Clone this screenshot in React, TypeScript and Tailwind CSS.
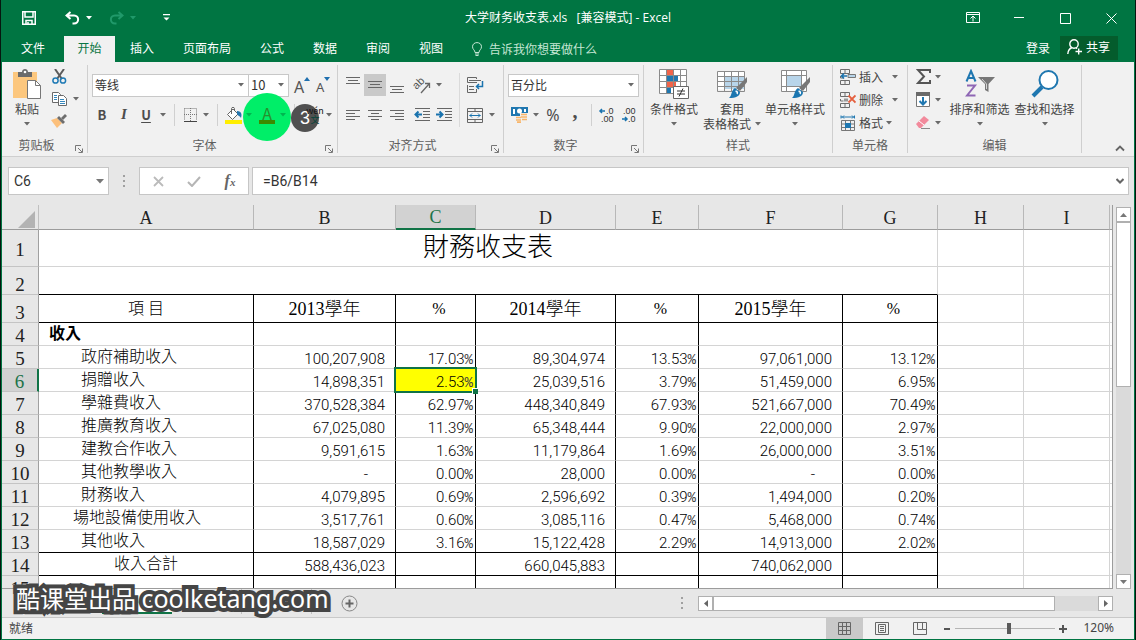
import type { ReactNode } from "react";
import clsx from "clsx";

const menuTabs = ["插入", "页面布局", "公式", "数据", "审阅", "视图"];

const columns = [
  { name: "A", width: "w-[215px]" },
  { name: "B", width: "w-[142px]" },
  { name: "C", width: "w-[80px]" },
  { name: "D", width: "w-[140px]" },
  { name: "E", width: "w-[83px]" },
  { name: "F", width: "w-[144px]" },
  { name: "G", width: "w-[95px]" },
  { name: "H", width: "w-[86px]" },
  { name: "I", width: "w-[86px]" },
];

const rows = [
  { n: 5, label: "政府補助收入", cells: ["100,207,908", "17.03%", "89,304,974", "13.53%", "97,061,000", "13.12%"] },
  { n: 6, label: "捐贈收入", cells: ["14,898,351", "2.53%", "25,039,516", "3.79%", "51,459,000", "6.95%"] },
  { n: 7, label: "學雜費收入", cells: ["370,528,384", "62.97%", "448,340,849", "67.93%", "521,667,000", "70.49%"] },
  { n: 8, label: "推廣教育收入", cells: ["67,025,080", "11.39%", "65,348,444", "9.90%", "22,000,000", "2.97%"] },
  { n: 9, label: "建教合作收入", cells: ["9,591,615", "1.63%", "11,179,864", "1.69%", "26,000,000", "3.51%"] },
  { n: 10, label: "其他教學收入", cells: ["-", "0.00%", "28,000", "0.00%", "-", "0.00%"] },
  { n: 11, label: "財務收入", cells: ["4,079,895", "0.69%", "2,596,692", "0.39%", "1,494,000", "0.20%"] },
  { n: 12, label: "場地設備使用收入", cells: ["3,517,761", "0.60%", "3,085,116", "0.47%", "5,468,000", "0.74%"] },
  { n: 13, label: "其他收入", cells: ["18,587,029", "3.16%", "15,122,428", "2.29%", "14,913,000", "2.02%"] },
  { n: 14, label: "收入合計", cells: ["588,436,023", "", "660,045,883", "", "740,062,000", ""] },
  { n: 15, label: "", cells: ["", "", "", "", "", ""] },
];

function Caret({ className = "text-[#6a6a6a]" }: { className?: string }) {
  return (
    <svg width="6" height="4" viewBox="0 0 6 4" className={className}>
      <path d="M0 0h6L3 3.5z" fill="currentColor" />
    </svg>
  );
}

function DropButton({ label, className }: { label: string; className?: string }) {
  return (
    <button aria-label={label} className="flex h-5 w-3 shrink-0 items-center justify-center">
      <Caret className={className} />
    </button>
  );
}

function IconButton({ label, children, className = "w-[22px]" }: { label: string; children: ReactNode; className?: string }) {
  return (
    <button aria-label={label} className={clsx("flex h-[22px] shrink-0 items-center justify-center", className)}>
      {children}
    </button>
  );
}

function Separator() {
  return <span className="mx-[5px] h-[22px] w-px shrink-0 bg-[#d0d0d0]" />;
}

function Group({ title, launcher, className, children }: { title: string; launcher?: boolean; className: string; children: ReactNode }) {
  return (
    <section className={clsx("flex h-[88px] shrink-0 flex-col border-r border-[#cfcfcf]", className)}>
      <div className="flex h-[72px]">{children}</div>
      <div className={clsx("relative h-4 text-center leading-4 text-[#5e5e5e]", launcher && "pr-4")}>
        {title}
        {launcher && (
          <button aria-label={title + "设置"} className="absolute right-1 bottom-0">
            <svg width="8" height="8" viewBox="0 0 8 8" fill="none" stroke="#777">
              <path d="M.5 6V.5H6M3 3l4 4M7.500 3.500v4h-4" />
            </svg>
          </button>
        )}
      </div>
    </section>
  );
}

function Lines({ spans, top = 0 }: { spans: number[][]; top?: number }) {
  return (
    <svg width="16" height="18" viewBox="0 0 16 18" stroke="#666">
      {spans.map(([a, b], i) => (
        <path key={i} d={`M${a} ${top + i * 3 + 0.5}H${b}`} />
      ))}
    </svg>
  );
}

function IndentIcon({ out }: { out?: boolean }) {
  return (
    <svg width="17" height="14" viewBox="0 0 17 14" fill="none" stroke="#666">
      <path d="M1 .5h15M9 3.500h7M9 6.500h7M9 9.500h7M1 12.500h15" />
      <path d={out ? "M8 6.500H1.500M4.500 3.500l-3 3 3 3" : "M0 6.500h6.500M3.500 3.500l3 3-3 3"} stroke="#1a73ae" strokeWidth="2" />
    </svg>
  );
}

function Brush() {
  return (
    <>
      <path d="M30 8v5l-7 9-4-3z" fill="#777" />
      <path d="M18 19l5 4c0 4-4 6-11 6 3-2 2-8 6-10z" fill="#1b76b0" />
      <path d="M18.500 22.500c1.500-.5 2.500 1 1.500 2.500" stroke="#fff" strokeWidth="1.500" fill="none" />
    </>
  );
}

function MiniGrid() {
  return <path d="M.5.5h9v4h-9zM5 .5v4M.5 11.500h9v4h-9zM5 11.500v4M.5 7v2h3" fill="none" stroke="#6d6d6d" />;
}

function BigButton({ icon, lines, className }: { icon: ReactNode; lines: string[]; className: string }) {
  return (
    <button className={clsx("flex shrink-0 flex-col items-center pt-1 leading-[15px]", className)}>
      <span className="mb-0.5 flex h-[30px] items-center">{icon}</span>
      <span>{lines[0]}</span>
      <span className="flex h-[15px] items-center gap-1">
        {lines[1]}
        <Caret />
      </span>
    </button>
  );
}

function TitleBar() {
  return (
    <header className="grid h-9 grid-cols-[1fr_auto_1fr] items-center text-white">
      <div className="flex items-center pl-4">
        <IconButton label="保存">
          <svg width="14" height="14" viewBox="0 0 14 14" fill="none" stroke="#fff" strokeWidth="1.500">
            <path d="M.75.75h12.500v12.500H.75zM3 1v5h8V1M4 13V9.500h6V13M6 11v2" />
          </svg>
        </IconButton>
        <IconButton label="撤销" className="ml-[21px] w-[22px]">
          <svg width="15" height="14" viewBox="0 0 15 14" fill="none" stroke="#fff" strokeWidth="2">
            <path d="M5.500 1 1.500 4.500l4 3.500M2 4.500h7c5.500 0 5.500 8 0 8H7.500" />
          </svg>
        </IconButton>
        <DropButton label="撤销列表" className="text-white" />
        <IconButton label="恢复" className="ml-[10px] w-[22px]">
          <svg width="15" height="14" viewBox="0 0 15 14" fill="none" stroke="#20996a" strokeWidth="2">
            <path d="M9.500 1l4 3.500-4 3.500M13 4.500H6c-5.500 0-5.500 8 0 8h1.500" />
          </svg>
        </IconButton>
        <DropButton label="恢复列表" className="text-[#20996a]" />
        <IconButton label="自定义快速访问工具栏" className="ml-4 w-[22px]">
          <svg width="7" height="8" viewBox="0 0 7 8" fill="#fff">
            <path d="M0 0h7v1.300H0zM.5 3.500h6l-3 3z" />
          </svg>
        </IconButton>
      </div>
      <h1 className="font-['Open_Sans','Noto_Sans_CJK_SC',sans-serif] text-xs">大学财务收支表.xls&nbsp;&nbsp; [兼容模式] - Excel</h1>
      <div className="flex items-center justify-end gap-6 pr-3">
        <IconButton label="功能区显示选项">
          <svg width="14" height="12" viewBox="0 0 14 12" fill="none" stroke="#fff">
            <path d="M.5.5h13v10H.5zM.5 2.500h13M7 9.500v-5M4.500 6.500 7 4l2.500 2.500" />
          </svg>
        </IconButton>
        <IconButton label="最小化">
          <svg width="10" height="2" viewBox="0 0 10 2"><path d="M0 .5h10" stroke="#fff" /></svg>
        </IconButton>
        <IconButton label="最大化">
          <svg width="11" height="11" viewBox="0 0 11 11"><path d="M.5.5h10v10H.5z" fill="none" stroke="#fff" /></svg>
        </IconButton>
        <IconButton label="关闭">
          <svg width="11" height="11" viewBox="0 0 11 11"><path d="M.5.5l10 10M10.500.5l-10 10" stroke="#fff" /></svg>
        </IconButton>
      </div>
    </header>
  );
}

function MenuBar() {
  return (
    <nav className="flex h-[26px] items-stretch text-white">
      <button className="w-[62px] shrink-0 pb-0.5">文件</button>
      <button className="w-[51px] shrink-0 bg-[#f1f1f1] pb-0.5 text-[#0a7544]">开始</button>
      <div className="flex gap-px pl-px">
        {menuTabs.map((tab) => (
          <button key={tab} className="shrink-0 px-[14px] pb-0.5">{tab}</button>
        ))}
      </div>
      <button className="ml-[15px] flex shrink-0 items-center gap-[7px] text-[#c5e6d4]">
        <svg width="10" height="14" viewBox="0 0 10 14" fill="none" stroke="currentColor">
          <path d="M3 10.500C3 8 .5 7.500.5 4.800.5-.8 9.500-.8 9.500 4.800 9.500 7.500 7 8 7 10.500zM3 12h4M3.500 13.500h3" />
        </svg>
        告诉我你想要做什么
      </button>
      <div className="ml-auto flex items-start gap-[10px] pr-4">
        <button className="h-6">登录</button>
        <button className="flex h-6 w-[58px] items-center gap-1 bg-[#045c2c] pb-0.5 pl-[7px]">
          <svg width="15" height="16" viewBox="0 0 15 16" fill="none" stroke="#fff" strokeWidth="1.400">
            <circle cx="7" cy="5" r="4.200" />
            <path d="M5 8.500C2.500 9.500 1 11.500.8 15M9 8.700l1 1M8.500 12.500H15M11.700 9.500v6" />
          </svg>
          共享
        </button>
      </div>
    </nav>
  );
}

function ClipboardGroup() {
  return (
    <Group title="剪贴板" launcher className="w-[86px]">
      <BigButton
        className="ml-1 w-[42px]"
        lines={["粘贴", ""]}
        icon={
          <svg width="28" height="30" viewBox="0 0 28 30">
            <path d="M0 3h24v26H0z" fill="#fcc77e" />
            <path d="M5 3h4c0-4 6-4 6 0h4v5H5z" fill="#6b6b6b" />
            <circle cx="12" cy="3" r="1.300" fill="#fff" />
            <path d="M14.500 11.500h8l5 5v13h-13z" fill="#fff" stroke="#777" />
            <path d="M22.500 11.500v5h5" fill="none" stroke="#777" />
          </svg>
        }
      />
      <div className="flex flex-col">
        <IconButton label="剪切">
          <svg width="15" height="15" viewBox="0 0 15 15" fill="none">
            <path d="M3 0l7 10M12 0L5 10" stroke="#5c5c5c" strokeWidth="2" />
            <circle cx="3.500" cy="11.500" r="2.600" stroke="#1f7ab5" strokeWidth="1.500" />
            <circle cx="11" cy="11.500" r="2.600" stroke="#1f7ab5" strokeWidth="1.500" />
          </svg>
        </IconButton>
        <div className="mt-px flex items-center">
          <IconButton label="复制">
            <svg width="15" height="14" viewBox="0 0 15 14" fill="#fff" stroke="#6a6a6a">
              <path d="M.5.5h6l2 2v8h-8z" />
              <path d="M6.500 3.500h5l3 3v7h-8z" />
              <path d="M2 3.500h3M2 5.500h3M2 7.500h3M8 7.500h4M8 9.500h5M8 11.500h5" stroke="#3687bd" />
            </svg>
          </IconButton>
          <DropButton label="复制选项" />
        </div>
        <IconButton label="格式刷">
          <svg width="16" height="14" viewBox="0 0 16 14">
            <path d="M0 6l6-2 5 5-5 5z" fill="#fcc07c" />
            <path d="M6 4l2-2 6 6-2 2z" fill="#6e6e6e" />
            <path d="M10 4l4-4 2 2-4 4z" fill="#6e6e6e" />
          </svg>
        </IconButton>
      </div>
    </Group>
  );
}

function FontGroup() {
  return (
    <Group title="字体" launcher className="w-[250px]">
      <div className="flex flex-col pt-2 pl-[3px]">
        <div className="flex h-6 items-center pl-px">
          <Combo label="字体名称" value="等线" className="w-[157px]" />
          <Combo label="字号" value="10" className="-ml-px w-[41px] text-[13px]" />
          <button aria-label="增大字号" className="ml-[5px] flex h-5 w-[19px] items-start font-['Noto_Sans'] text-base leading-6 text-[#555]">
            A<svg width="6" height="6" viewBox="0 0 6 6"><path d="M3 2l3 4H0z" fill="#1f6fae" /></svg>
          </button>
          <button aria-label="减小字号" className="ml-[3px] flex h-5 w-[19px] items-start font-['Noto_Sans'] text-[13px] leading-6 text-[#555]">
            A<svg width="6" height="6" viewBox="0 0 6 6"><path d="M0 2h6L3 6z" fill="#1f6fae" /></svg>
          </button>
        </div>
        <div className="relative mt-[7px] flex h-[22px] items-center text-[13px] text-[#4d4d4d]">
          <IconButton label="加粗"><b>B</b></IconButton>
          <IconButton label="倾斜"><i className="font-['Liberation_Serif'] text-[15px] font-bold">I</i></IconButton>
          <IconButton label="下划线"><u className="font-bold underline-offset-2">U</u></IconButton>
          <DropButton label="下划线样式" />
          <Separator />
          <IconButton label="边框" className="w-5">
            <svg width="13" height="14" viewBox="0 0 13 14" fill="none" stroke="#777">
              <path d="M.5.5h12v12M.5.5v12M6.500 0v13M0 6.500h13" strokeDasharray="1 1" />
              <path d="M0 13.500h13" stroke="#444" />
            </svg>
          </IconButton>
          <DropButton label="边框样式" />
          <Separator />
          <IconButton label="填充颜色" className="w-5">
            <svg width="17" height="17" viewBox="0 0 17 17">
              <path d="M2.500 7.500 8 2l5 5-5.500 5.500z" fill="#fff" stroke="#666" />
              <path d="M6.500 7V1.500c0-1.500 3-1.500 3 0V4" fill="none" stroke="#666" />
              <path d="M12 4c5 0 5 4 4 7-1-2-3-2-4-4z" fill="#2576ae" />
              <path d="M0 13h17v4H0z" fill="#ffee00" />
            </svg>
          </IconButton>
          {/* click marker sits under the font colour button */}
          <span className="absolute -top-[11px] left-[152px] size-12 rounded-full bg-[#00ee68]" />
          <span className="relative flex items-center">
            <DropButton label="填充颜色选项" className="text-[#00b650]" />
            <IconButton label="字体颜色" className="ml-0.5 w-5">
              <span className="flex flex-col items-center text-base leading-[13px] text-[#27902f]">
                A
                <span className="h-1 w-4 bg-[#3c8a00]" />
              </span>
            </IconButton>
            <DropButton label="字体颜色选项" className="text-[#00b650]" />
          </span>
          <Separator />
          <span className="absolute top-0 left-[200px] flex size-7 items-center justify-center rounded-full bg-[#505050] font-['Liberation_Sans'] text-lg text-white">3</span>
          <IconButton label="拼音" className="relative ml-[5px] w-5">
            <span className="flex flex-col items-center text-[9px] leading-[9px] text-[#111]">
              wén
              <span className="text-[#07443a]">文</span>
            </span>
          </IconButton>
          <button aria-label="拼音选项" className="flex h-5 w-2 items-center justify-center"><Caret /></button>
        </div>
      </div>
    </Group>
  );
}

function Combo({ label, value, className }: { label: string; value: string; className: string }) {
  return (
    <span className={clsx("relative flex h-[23px] shrink-0 items-center border border-[#c8c8c8] bg-white", className)}>
      <select aria-label={label} className="h-full w-full appearance-none pl-0.5 text-[#333] outline-none">
        <option>{value}</option>
      </select>
      <span className="pointer-events-none absolute right-1">
        <Caret />
      </span>
    </span>
  );
}

function AlignGroup() {
  return (
    <Group title="对齐方式" launcher className="w-[166px]">
      <div className="flex flex-col pt-2 pl-1">
        <div className="flex h-6 items-center">
          <IconButton label="顶端对齐"><Lines spans={[[1, 15], [3, 13], [1, 15]]} top={1} /></IconButton>
          <IconButton label="垂直居中" className="w-[22px] bg-[#c9c9c9]"><Lines spans={[[1, 15], [3, 13], [1, 15]]} top={5} /></IconButton>
          <IconButton label="底端对齐"><Lines spans={[[1, 15], [3, 13], [1, 15]]} top={10} /></IconButton>
          <IconButton label="方向" className="ml-[3px] w-[22px]">
            <svg width="20" height="20" viewBox="0 0 20 20" fill="none" stroke="#666" fontFamily="Liberation Sans" className="shrink-0">
              <text x="0" y="12" transform="rotate(-45 6 8)" fontSize="11" fill="#555" stroke="none">ab</text>
              <path d="M9 18 17 9M13 8.500h4.500V13" strokeWidth="1.300" />
            </svg>
          </IconButton>
          <DropButton label="方向选项" />
        </div>
        <div className="mt-[7px] flex h-[22px] items-center">
          <IconButton label="左对齐"><Lines spans={[[1, 15], [1, 10], [1, 15], [1, 10]]} top={4} /></IconButton>
          <IconButton label="居中"><Lines spans={[[1, 15], [4, 12], [1, 15], [4, 12]]} top={4} /></IconButton>
          <IconButton label="右对齐"><Lines spans={[[1, 15], [6, 15], [1, 15], [6, 15]]} top={4} /></IconButton>
          <IconButton label="减少缩进量" className="ml-[3px] w-[22px]"><IndentIcon out /></IconButton>
          <IconButton label="增加缩进量"><IndentIcon /></IconButton>
        </div>
      </div>
      <span className="mt-2 ml-1 h-[54px] w-px bg-[#dadada]" />
      <div className="flex flex-col pt-2 pl-1">
        <div className="flex h-6 items-center">
          <IconButton label="自动换行">
            <svg width="17" height="16" viewBox="0 0 17 16" fill="none" stroke="#666">
              <path d="M9.500 2V.5h-9v5h9V5M.5 8v7.500h9V12M2 3.500h12M2 5.500h8M2 9.500h5M2 12.500h5" />
              <path d="M15.500 4v5.500H9.500M12 7l-2.500 2.500L12 12" stroke="#1a73ae" strokeWidth="1.500" />
            </svg>
          </IconButton>
        </div>
        <div className="mt-[7px] flex h-[22px] items-center">
          <IconButton label="合并后居中">
            <svg width="16" height="15" viewBox="0 0 16 15" fill="none" stroke="#666">
              <path d="M.5.5h15v14H.5zM.5 3.500h15M.5 11.500h15M8 .5v3M8 11.500v3" />
              <path d="M2.500 7.500h11M5 5.500l-2 2 2 2M11 5.500l2 2-2 2" stroke="#1a73ae" />
            </svg>
          </IconButton>
          <DropButton label="合并选项" />
        </div>
      </div>
    </Group>
  );
}

function DecimalIcon({ more }: { more?: boolean }) {
  return (
    <svg width="20" height="18" viewBox="0 0 20 18" fontSize="9" fontFamily="Liberation Sans" fill="#333" className="shrink-0">
      <text x={more ? 8 : 3} y="8">{more ? ".0" : ".00"}</text>
      <text x={more ? 3 : 8} y="16">{more ? ".00" : ".0"}</text>
      <path d={more ? "M7 5H2M4 3 2 5l2 2" : "M2 13h5M5 11l2 2-2 2"} fill="none" stroke="#1a73ae" strokeWidth="1.500" />
    </svg>
  );
}

function NumberGroup() {
  return (
    <Group title="数字" launcher className="w-[140px]">
      <div className="flex flex-col pt-2 pl-1">
        <div className="flex h-6 items-center">
          <Combo label="数字格式" value="百分比" className="w-[131px]" />
        </div>
        <div className="mt-[7px] flex h-[22px] items-center text-[#4d4d4d]">
          <IconButton label="会计数字格式">
            <svg width="17" height="16" viewBox="0 0 17 16">
              <path d="M0 0h17v9H0z" fill="#1f77b0" />
              <path d="M2 2h2v5H2zM13 2h2v3h-2z" fill="#fff" />
              <circle cx="8.500" cy="4" r="2.500" fill="#fff" />
              <path d="M9 6h8v9H4V9h5z" fill="#f1f1f1" />
              <path d="M10 7.500h6M10 10h6M5 10.500h5M11 12.500h5M5 13h5M6 15.200h4" stroke="#f8b56a" strokeWidth="1.700" />
            </svg>
          </IconButton>
          <DropButton label="货币选项" />
          <IconButton label="百分比样式"><span className="font-['Noto_Sans'] text-base">%</span></IconButton>
          <IconButton label="千位分隔样式"><b className="h-6 font-['Liberation_Serif'] text-xl leading-4">,</b></IconButton>
          <Separator />
          <IconButton label="增加小数位数"><DecimalIcon more /></IconButton>
          <IconButton label="减少小数位数"><DecimalIcon /></IconButton>
        </div>
      </div>
    </Group>
  );
}

function StyleGroup() {
  return (
    <Group title="样式" className="w-[189px]">
      <BigButton
        className="ml-0.5 w-14"
        lines={["条件格式", ""]}
        icon={
          <svg width="30" height="30" viewBox="0 0 30 30" fill="none">
            <path d="M.5.500h27v24H.5z" fill="#fff" />
            <path d="M8 1h6v5H8zM8 13h9v5H8z" fill="#f0644a" />
            <path d="M8 7h11v5H8zM8 19h4v6H8z" fill="#1f77b0" />
            <path d="M.5.5h27v24H.5zM7.500.5v24M14.500.5v24M21.500.5v24M.5 6.500h27M.5 12.500h27M.5 18.500h27" stroke="#8a8a8a" />
            <path d="M14.500 17.500h15v12h-15z" fill="#fff" stroke="#666" />
            <path d="M18 22h8M18 25h8M24 19.500l-4 8" stroke="#333" />
          </svg>
        }
      />
      <BigButton
        className="w-[60px]"
        lines={["套用", "表格格式"]}
        icon={
          <svg width="30" height="30" viewBox="0 0 30 30" fill="none">
            <path d="M.5 2.500h27v18H.5z" fill="#fff" />
            <path d="M7 8h20v12H7z" fill="#b8d5ea" />
            <path d="M.5 2.500h27v20H.5zM7.500 2.500v20M14.500 2.500v20M21.500 2.500v20M.5 7.500h27M.5 12.500h27M.5 17.500h27" stroke="#8a8a8a" />
            <Brush />
          </svg>
        }
      />
      <BigButton
        className="w-[66px]"
        lines={["单元格样式", ""]}
        icon={
          <svg width="30" height="30" viewBox="0 0 30 30" fill="none">
            <path d="M1.500 1.500h25v21h-25z" fill="#fff" />
            <path d="M7 7h14v10H7z" fill="#b8d5ea" />
            <path d="M1.500 1.500h25v21h-25zM6.500 1.500v21M21.500 1.500v21M1.500 6.500h25M1.500 17.500h25" stroke="#8a8a8a" />
            <Brush />
          </svg>
        }
      />
    </Group>
  );
}

function CellsGroup() {
  return (
    <Group title="单元格" className="w-[75px]">
      <div className="flex flex-col pl-[7px]">
        <button className="flex h-[23px] items-center">
          <svg width="16" height="16" viewBox="0 0 16 16">
            <MiniGrid />
            <path d="M8 5.500h7.500v3H8z" fill="#b8d5ea" stroke="#777" />
            <path d="M7 7H1.500M4 4.500 1.500 7 4 9.500" fill="none" stroke="#1a73ae" strokeWidth="1.600" />
          </svg>
          <span className="mr-[9px] ml-[3px]">插入</span>
          <Caret />
        </button>
        <button className="flex h-[23px] items-center">
          <svg width="16" height="16" viewBox="0 0 16 16">
            <MiniGrid />
            <path d="M4 6.500h4v3H4z" fill="#999" />
            <path d="M8.500 3.500l7 7M15.500 3.500l-7 7" stroke="#e5603f" strokeWidth="1.800" />
          </svg>
          <span className="mr-[9px] ml-[3px]">删除</span>
          <Caret />
        </button>
        <button className="flex h-[23px] items-center">
          <svg width="16" height="16" viewBox="0 0 16 16" fill="none">
            <path d="M1.500 5.500h13v10h-13zM5.500 5.500v10M10.500 5.500v10M1.500 9h13M1.500 12.500h13" stroke="#777" />
            <path d="M5 8h6v5H5z" fill="#1f77b0" />
            <path d="M1 .5v3M14.500.5v3M1 2h13.500M4 .5 2.500 2 4 3.500M12 .5 13.500 2 12 3.500" stroke="#1f77b0" />
          </svg>
          <span className="mx-[3px]">格式</span>
          <Caret />
        </button>
      </div>
    </Group>
  );
}

function EditGroup() {
  return (
    <Group title="编辑" className="w-[174px]">
      <div className="flex flex-col pl-1.5">
        <div className="flex h-[23px] items-center">
          <IconButton label="自动求和" className="w-[18px]">
            <svg width="15" height="15" viewBox="0 0 15 15" fill="none" stroke="#555" strokeWidth="2">
              <path d="M14 4V1H2l6 6.500L2 14h12v-3" />
            </svg>
          </IconButton>
          <DropButton label="求和选项" />
        </div>
        <div className="flex h-[23px] items-center">
          <IconButton label="填充" className="w-[18px]">
            <svg width="14" height="15" viewBox="0 0 14 15" fill="none">
              <path d="M.5.5h13v14H.5z" fill="#fff" stroke="#777" />
              <path d="M0 0h14v4H0z" fill="#6a6a6a" />
              <path d="M7 5v7.500M3.500 9 7 12.500 10.500 9" stroke="#1f77b0" strokeWidth="2" />
            </svg>
          </IconButton>
          <DropButton label="填充选项" />
        </div>
        <div className="flex h-[23px] items-center">
          <IconButton label="清除" className="w-[18px]">
            <svg width="14" height="13" viewBox="0 0 14 13">
              <path d="M0 8l8-8 5 4-8 8H3z" fill="#f28a9c" />
              <path d="M3 5l5 4" stroke="#fff" />
              <path d="M5 12.500h9" stroke="#888" />
            </svg>
          </IconButton>
          <DropButton label="清除选项" />
        </div>
      </div>
      <BigButton
        className="ml-[3px] w-[65px]"
        lines={["排序和筛选", ""]}
        icon={
          <svg width="30" height="30" viewBox="0 0 30 30" fill="none">
            <path d="M1.500 12.500 6 2l4.500 10.500M3 9h6" stroke="#1f77b0" strokeWidth="2" />
            <path d="M2 16.500h8l-8 10h8.500" stroke="#8e66b4" strokeWidth="2" />
            <path d="M13 8h17l-6.500 7v8L20 21v-6z" fill="#777" />
            <path d="M17 10l4.500 5v5" stroke="#d5d5d5" />
          </svg>
        }
      />
      <BigButton
        className="w-[65px]"
        lines={["查找和选择", ""]}
        icon={
          <svg width="28" height="28" viewBox="0 0 28 28" fill="none">
            <circle cx="17.500" cy="10" r="9" fill="#fff" stroke="#1f77b0" strokeWidth="2" />
            <path d="M11 17 2 26" stroke="#1f77b0" strokeWidth="4" />
          </svg>
        }
      />
    </Group>
  );
}

function Ribbon() {
  return (
    <div className="flex h-[95px] shrink-0 items-start overflow-hidden border-b border-[#cfcfcf] bg-[#f1f1f1] pt-[3px] text-[#444]">
      <ClipboardGroup />
      <FontGroup />
      <AlignGroup />
      <NumberGroup />
      <StyleGroup />
      <CellsGroup />
      <EditGroup />
      <button aria-label="折叠功能区" className="mr-[9px] ml-auto self-end pb-1">
        <svg width="10" height="7" viewBox="0 0 10 7" fill="none" stroke="#666" strokeWidth="1.800"><path d="M1 5.500l4-4 4 4" /></svg>
      </button>
    </div>
  );
}

function Dots() {
  return (
    <svg width="2" height="12" viewBox="0 0 2 12" fill="#a0a0a0">
      <path d="M0 0h2v2H0zM0 5h2v2H0zM0 10h2v2H0z" />
    </svg>
  );
}

function FormulaBar() {
  return (
    <div className="flex h-12 shrink-0 items-center pr-[5px] pl-1.5 font-['Roboto'] text-sm text-[#333]">
      <div className="relative flex h-7 w-[101px] items-center border border-[#c6c6c6] bg-white">
        <input aria-label="名称框" defaultValue="C6" className="h-full w-full pl-[5px] outline-none" />
        <span className="absolute right-1">
          <svg width="8" height="5" viewBox="0 0 8 5"><path d="M0 0h8L4 4.500z" fill="#777" /></svg>
        </span>
      </div>
      <span className="flex w-[30px] justify-center"><Dots /></span>
      <div className="flex h-7 w-[110px] items-center justify-around border border-[#c6c6c6] bg-white">
        <IconButton label="取消">
          <svg width="11" height="11" viewBox="0 0 11 11"><path d="M1 1l9 9M10 1l-9 9" stroke="#bbb" strokeWidth="1.800" /></svg>
        </IconButton>
        <IconButton label="输入">
          <svg width="14" height="11" viewBox="0 0 14 11"><path d="M1 6l4 4 8-9" fill="none" stroke="#b5b5b5" strokeWidth="2" /></svg>
        </IconButton>
        <IconButton label="插入函数">
          <i className="font-['Liberation_Serif'] text-base leading-4 font-bold text-[#666]">f<span className="text-[11px]">x</span></i>
        </IconButton>
      </div>
      <div className="relative ml-[3px] flex h-7 flex-1 items-center border border-[#c6c6c6] bg-white">
        <input aria-label="编辑栏" defaultValue="=B6/B14" className="h-full w-full pl-[10px] outline-none" />
        <button aria-label="展开编辑栏" className="absolute right-1">
          <svg width="8" height="6" viewBox="0 0 8 6" fill="none" stroke="#666" strokeWidth="2"><path d="M.5 1 4 4.500 7.500 1" /></svg>
        </button>
      </div>
    </div>
  );
}

function RowHeader({ n, active }: { n: number; active?: boolean }) {
  return (
    <th
      scope="row"
      className={clsx(
        "border-r border-b border-b-[#c4c4c4] text-[19px] leading-[19px] font-normal",
        n === 1 ? "pt-0.5 align-middle" : "align-bottom",
        active ? "border-r-2 border-r-[#107346] bg-[#d2d2d2] text-[#1c7348]" : "border-r-[#a0a0a0] bg-[#e7e7e7] text-[#222]",
      )}
    >
      {n}
    </th>
  );
}

function BlankCells() {
  return (
    <>
      <td className="border-r border-b border-[#d4d4d4]" />
      <td className="border-r border-b border-[#d4d4d4]" />
      <td className="border-b border-[#d4d4d4]" />
    </>
  );
}

function ValueCell({ value, n, selected }: { value: string; n: number; selected?: boolean }) {
  const percent = value.endsWith("%");
  return (
    <td
      className={clsx(
        "border-r border-b border-r-black text-right align-bottom font-['Roboto'] text-[15px] leading-[18px] font-light text-black",
        n > 12 && n < 15 ? "border-b-black" : "border-b-[#d4d4d4]",
        percent ? "pr-0.5" : value === "-" ? "pr-[27px]" : "pr-[10px]",
        selected && "relative bg-[#ffff00]",
      )}
    >
      {percent ? value.slice(0, -1) : value}
      {percent && <span className="font-['Liberation_Mono'] text-sm leading-none text-[#444]">%</span>}
      {selected && (
        <>
          <span className="absolute -top-0.5 -right-0.5 -bottom-0.5 -left-0.5 border-2 border-[#107346]" />
          <span className="absolute -right-[3px] -bottom-[3px] size-[6px] border-t border-l border-white bg-[#107346]" />
        </>
      )}
    </td>
  );
}

function Sheet() {
  return (
    <table className="w-full table-fixed border-separate border-spacing-0 bg-white font-['Liberation_Serif','Noto_Sans_CJK_TC',serif] text-base text-black">
      <colgroup>
        <col className="w-[37px]" />
        {columns.map((c) => (
          <col key={c.name} className={c.width} />
        ))}
        <col />
      </colgroup>
      <thead>
        <tr className="h-[25px] bg-[#e7e7e7] text-lg leading-[22px] text-[#222]">
          <th className="border-r border-b border-r-[#c0c0c0] border-b-[#9c9c9c] p-0">
            <svg width="17" height="17" viewBox="0 0 17 17" className="mt-1 mr-[3px] ml-auto"><path d="M17 0v17H0z" fill="#b3b3b3" /></svg>
          </th>
          {columns.map((c) => (
            <th
              key={c.name}
              scope="col"
              className={clsx(
                "border-r border-r-[#b8b8b8] pt-px pb-0 font-normal",
                c.name === "C" ? "border-b-2 border-b-[#107346] bg-[#d2d2d2] text-[#1c7348]" : "border-b border-b-[#9c9c9c]",
              )}
            >
              {c.name}
            </th>
          ))}
          <th className="border-b border-b-[#9c9c9c]" />
        </tr>
      </thead>
      <tbody>
        <tr className="h-[37px]">
          <RowHeader n={1} />
          <td colSpan={7} className="border-r border-b border-[#d4d4d4] text-center text-[26px] leading-8 font-light">財務收支表</td>
          <BlankCells />
        </tr>
        <tr className="h-7">
          <RowHeader n={2} />
          <td colSpan={7} className="border-r border-b border-r-[#d4d4d4] border-b-black" />
          <BlankCells />
        </tr>
        <tr className="h-7 text-lg leading-6">
          <RowHeader n={3} />
          <td className="border-r border-b border-black text-center text-base leading-6 font-light">項 目</td>
          {["2013學年", "%", "2014學年", "%", "2015學年", "%"].map((text, i) => (
            <td key={i} className={clsx("border-r border-b border-black text-center font-light", text === "%" && "pl-[7px] text-base leading-6")}>
              {text}
            </td>
          ))}
          <BlankCells />
        </tr>
        <tr className="h-[23px]">
          <RowHeader n={4} />
          <td className="border-r border-b border-r-black border-b-[#d4d4d4] pl-[10px] leading-[22px] font-bold">收入</td>
          {[0, 1, 2, 3, 4, 5].map((i) => (
            <td key={i} className="border-r border-b border-r-black border-b-[#d4d4d4]" />
          ))}
          <BlankCells />
        </tr>
        {rows.map((row) => (
          <tr key={row.n} className="h-[23px]">
            <RowHeader n={row.n} active={row.n === 6} />
            <td
              className={clsx(
                "border-r border-b border-r-black align-top leading-[21px] font-light",
                row.n > 12 && row.n < 15 ? "border-b-black" : "border-b-[#d4d4d4]",
                row.n === 14 ? "text-center" : row.n === 12 ? "pl-[34px]" : "pl-[42px]",
              )}
            >
              {row.label}
            </td>
            {row.cells.map((value, i) => (
              <ValueCell key={i} value={value} n={row.n} selected={row.n === 6 && i === 1} />
            ))}
            <BlankCells />
          </tr>
        ))}
      </tbody>
    </table>
  );
}

const scrollButton = "flex size-[15px] shrink-0 items-center justify-center border border-[#b0b0b0] bg-white";

function VerticalScroll() {
  return (
    <div className="mx-[3px] mt-0.5 flex w-[15px] shrink-0 flex-col bg-[#dadada]">
      <button aria-label="向上滚动" className={scrollButton}>
        <svg width="7" height="4" viewBox="0 0 7 4"><path d="M3.500 0 7 4H0z" fill="#777" /></svg>
      </button>
      <div className="h-[165px] border border-[#b0b0b0] bg-white" />
      <button aria-label="向下滚动" className={clsx(scrollButton, "mt-auto")}>
        <svg width="7" height="4" viewBox="0 0 7 4"><path d="M0 0h7L3.500 4z" fill="#777" /></svg>
      </button>
    </div>
  );
}

function SheetTabs() {
  return (
    <div className="relative flex h-7 shrink-0 items-center">
      <div className="ml-[100px] flex h-full items-start text-[#444]">
        <button className="h-[25px] w-[70px] border-b-2 border-[#107346] bg-white font-bold text-[#107346]">Sheet1</button>
        <button className="h-[25px] w-[70px] border-r border-[#c0c0c0]">Sheet2</button>
        <button className="h-[25px] w-[70px] border-r border-[#c0c0c0]">Sheet3</button>
      </div>
      <button aria-label="新工作表" className="ml-[29px]">
        <svg width="17" height="17" viewBox="0 0 17 17" fill="none" stroke="#888">
          <circle cx="8.500" cy="8.500" r="7.500" />
          <path d="M4.500 8.500h8M8.500 4.500v8" stroke="#666" strokeWidth="2" />
        </svg>
      </button>
      <div className="pointer-events-none absolute top-[-9px] left-[14px] whitespace-nowrap text-2xl leading-9 text-white [-webkit-text-stroke:8px_#454545] [paint-order:stroke_fill] [stroke-linejoin:round]">
        酷课堂出品 <span className="font-['Noto_Sans'] text-[25px]">coolketang.com</span>
      </div>
      <div className="mr-[21px] ml-auto flex items-center">
        <Dots />
        <div className="ml-[15px] flex h-[15px] w-[415px] bg-[#dadada]">
          <button aria-label="向左滚动" className={scrollButton}>
            <svg width="4" height="7" viewBox="0 0 4 7"><path d="M4 0v7L0 3.500z" fill="#666" /></svg>
          </button>
          <div className="w-[342px] border border-[#b0b0b0] bg-white" />
          <button aria-label="向右滚动" className={clsx(scrollButton, "ml-auto")}>
            <svg width="4" height="7" viewBox="0 0 4 7"><path d="M0 0v7l4-3.500z" fill="#666" /></svg>
          </button>
        </div>
      </div>
    </div>
  );
}

function StatusBar() {
  return (
    <footer className="flex h-[22px] shrink-0 items-center border-t border-[#c9c9c9] bg-[#f1f1f1] pl-[7px] text-[#444]">
      <span className="pb-0.5">就绪</span>
      <div className="ml-auto flex h-full items-center">
        <button aria-label="普通" className="flex h-full w-[37px] items-center justify-center bg-[#c9c9c9]">
          <svg width="13" height="13" viewBox="0 0 13 13" fill="none" stroke="#666"><path d="M.5.5h12v12H.5zM4.500.5v12M8.500.5v12M.5 4.500h12M.5 8.500h12" /></svg>
        </button>
        <button aria-label="页面布局" className="flex w-[38px] justify-center">
          <svg width="14" height="13" viewBox="0 0 14 13" fill="none" stroke="#666"><path d="M.5.5h13v12H.5zM3.500 2.500h7v8h-7zM5 4.500h4M5 6.500h4M5 8.500h4" /></svg>
        </button>
        <button aria-label="分页预览" className="flex w-[38px] justify-center">
          <svg width="14" height="13" viewBox="0 0 14 13" fill="none" stroke="#666"><path d="M.5.5h13v12H.5zM4.500.5v7h5v-7M9.500 7.500h4" /></svg>
        </button>
        <button aria-label="缩小" className="flex w-4 justify-center">
          <svg width="6" height="2" viewBox="0 0 6 2"><path d="M0 1h6" stroke="#555" strokeWidth="2" /></svg>
        </button>
        <input
          type="range"
          aria-label="缩放"
          defaultValue={54}
          className="h-3 w-[100px] appearance-none bg-[linear-gradient(#b5b5b5,#b5b5b5)] bg-[length:100%_1px] bg-center bg-no-repeat [&::-webkit-slider-thumb]:h-[11px] [&::-webkit-slider-thumb]:w-1 [&::-webkit-slider-thumb]:appearance-none [&::-webkit-slider-thumb]:bg-[#5a5a5a]"
        />
        <button aria-label="放大" className="flex w-4 justify-center">
          <svg width="8" height="8" viewBox="0 0 8 8"><path d="M0 4h8M4 0v8" stroke="#555" strokeWidth="2" /></svg>
        </button>
        <span className="mr-5 ml-3 pb-0.5 font-['Noto_Sans']">120%</span>
      </div>
    </footer>
  );
}

export default function App() {
  return (
    <div className="h-screen bg-[#06170f] px-px font-['Noto_Sans_CJK_SC',sans-serif] text-xs">
      <div className="flex h-full flex-col overflow-hidden border-x border-b border-[#007542] bg-[#e7e7e7]">
        <div className="shrink-0 bg-[#007542]">
          <TitleBar />
          <MenuBar />
        </div>
        <Ribbon />
        <FormulaBar />
        <main className="flex min-h-0 flex-1">
          <div className="min-w-0 flex-1 overflow-hidden border-r border-b border-[#9c9c9c]">
            <Sheet />
          </div>
          <VerticalScroll />
        </main>
        <SheetTabs />
        <StatusBar />
      </div>
    </div>
  );
}
